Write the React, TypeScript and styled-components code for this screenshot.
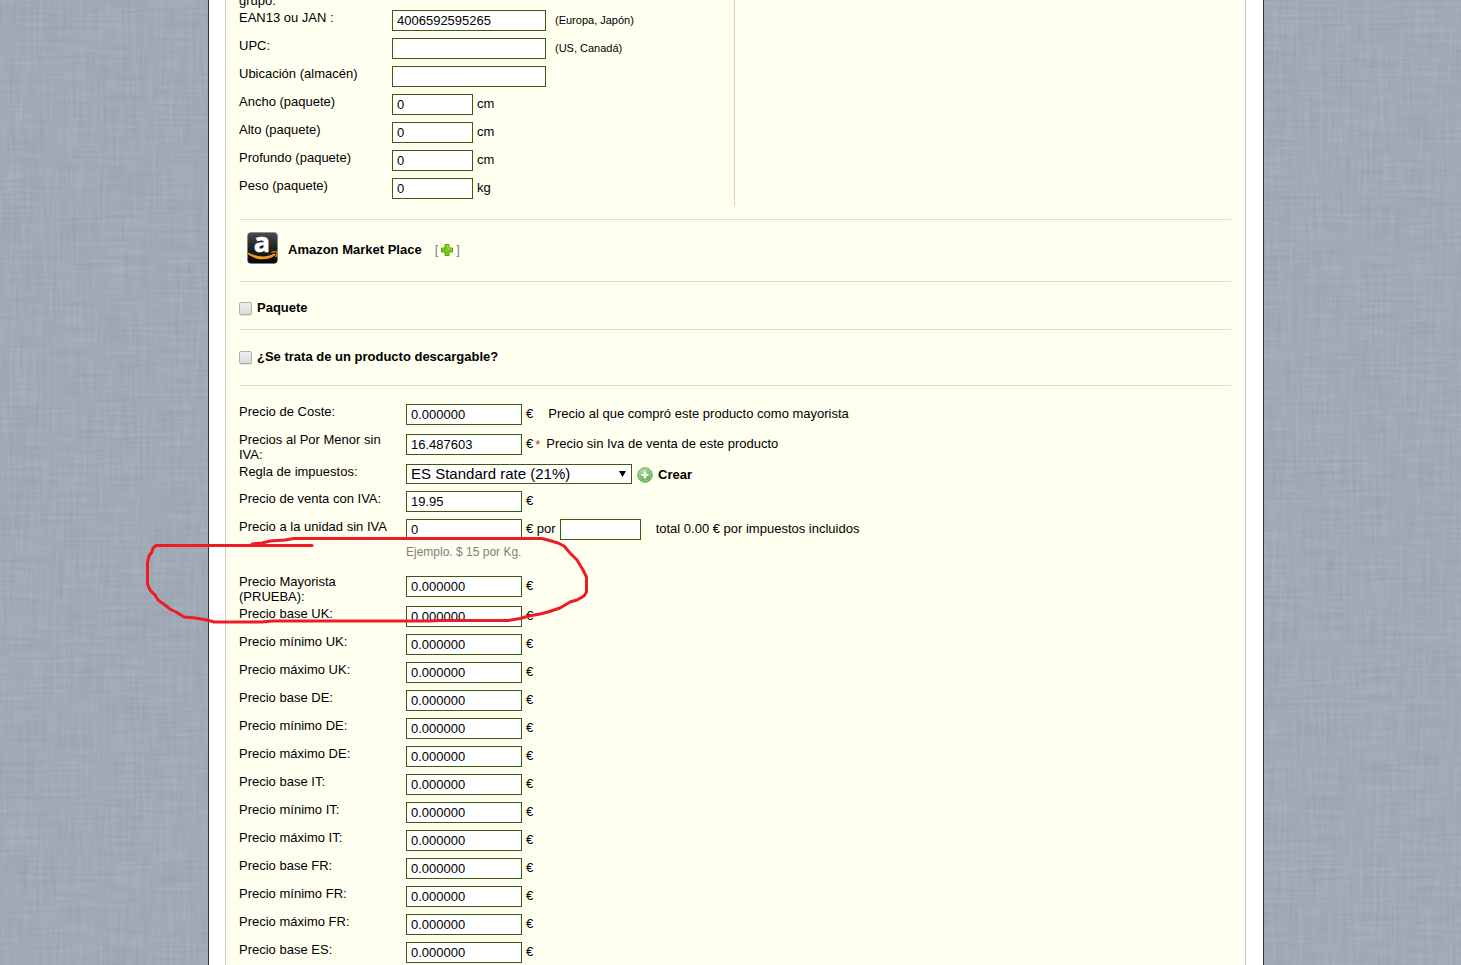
import React from "react";
import styled, { createGlobalStyle } from "styled-components";

const GlobalStyle = createGlobalStyle`
  * { box-sizing: border-box; }
  body {
    margin: 0;
    background: #a1aab6;
    color: #000;
    font: 13px/15px "Liberation Sans", Arial, sans-serif;
  }
`;

const Page = styled.div`
  position: relative;
  height: 100vh;
  overflow: hidden;
  padding: 0 197px 0 208px;
`;

const Fabric = styled.svg`
  position: absolute;
  inset: 0;
  width: 100%;
  height: 100%;
`;

const Sheet = styled.div`
  position: relative;
  background: #fff;
  border: solid #333;
  border-width: 0 1px;
  padding: 0 17px 0 16px;
`;

const Panel = styled.form`
  margin: 0;
  background: #fffff0;
  border: solid #ccc;
  border-width: 0 1px;
  padding: 0 14px 0 13px;
`;

const Columns = styled.div`
  display: grid;
  grid-template-columns: 1fr 1fr;
  margin-top: -7px;
`;

const LeftColumn = styled.div`
  border-right: 1px solid #e0d0b1;
`;

const Section = styled.section<{ $height: number; $padding?: string }>`
  display: flex;
  align-items: center;
  height: ${(p) => p.$height}px;
  padding: ${(p) => p.$padding ?? "0"};
  border-bottom: 1px solid #ddd;
`;

const Row = styled.div<{ $label: number; $height?: number }>`
  display: grid;
  grid-template-columns: ${(p) => p.$label}px 1fr;
  align-items: start;
  min-height: ${(p) => p.$height ?? 28}px;
`;

const Label = styled.label`
  padding-right: 8px;
`;

const Field = styled.div<{ $top?: number }>`
  display: flex;
  align-items: center;
  gap: 4px;
  padding-top: ${(p) => p.$top ?? 0}px;
  white-space: nowrap;
`;

const TextInput = styled.input<{ $width: number }>`
  width: ${(p) => p.$width}px;
  height: 21px;
  padding: 0 4px;
  border: 1px solid #3d5b0e;
  border-radius: 0;
  background: #fff;
  color: #000;
  font: 13px/15px "Liberation Sans", Arial, sans-serif;
  outline: none;
`;

const SelectWrap = styled.div`
  position: relative;
  display: flex;
`;

const Select = styled.select`
  appearance: none;
  width: 226px;
  height: 20px;
  padding: 0 20px 0 4px;
  border: 1px solid #3d5b0e;
  border-radius: 0;
  background: #fff;
  color: #000;
  font: 15px/18px "Liberation Sans", Arial, sans-serif;
`;

const SelectArrow = styled.svg`
  position: absolute;
  right: 6px;
  top: 7px;
  pointer-events: none;
`;

const Small = styled.span`
  font-size: 11px;
  padding-left: 5px;
`;

const Unit = styled.span`
  padding-bottom: 2px;
`;

const Note = styled.span<{ $gap: number }>`
  padding: 0 0 2px ${(p) => p.$gap}px;
`;

const Required = styled.sup`
  color: #c33;
  font-size: 13px;
  line-height: 13px;
  margin: 0 -1px 0 -2px;
`;

const Hint = styled.p`
  margin: 5px 0 0;
  color: #7f7f7f;
  font-size: 12px;
`;

const Logo = styled.svg`
  margin-bottom: 4px;
`;

const Title = styled.strong`
  margin-left: 9px;
`;

const Expand = styled.button`
  display: flex;
  align-items: center;
  gap: 2px;
  margin-left: 13px;
  padding: 0;
  border: 0;
  background: none;
  color: #7f7f7f;
  font: inherit;
`;

const CreateLink = styled.a`
  display: flex;
  align-items: center;
  gap: 5px;
  margin-left: 1px;
  color: #000;
  font-weight: bold;
  text-decoration: none;
`;

const CheckLabel = styled.label`
  display: flex;
  align-items: center;
  gap: 5px;
  font-weight: bold;
`;

const Checkbox = styled.input`
  appearance: none;
  width: 13px;
  height: 13px;
  margin: 1px 0 0;
  border: 1px solid #b1b1ac;
  border-radius: 2px;
  background: linear-gradient(#eee, #dcdcdc);
  box-shadow: 0 1px 1px #e4e4d8;
`;

const Prices = styled.div`
  padding-top: 18px;
`;

const Marker = styled.svg`
  position: absolute;
  left: 140px;
  top: 530px;
  pointer-events: none;
`;

const dimensions = [
  ["ancho", "Ancho (paquete)", "cm"],
  ["alto", "Alto (paquete)", "cm"],
  ["profundo", "Profundo (paquete)", "cm"],
  ["peso", "Peso (paquete)", "kg"],
];

const marketPrices = [
  "base UK", "mínimo UK", "máximo UK",
  "base DE", "mínimo DE", "máximo DE",
  "base IT", "mínimo IT", "máximo IT",
  "base FR", "mínimo FR", "máximo FR",
  "base ES",
];

function AmazonLogo() {
  return (
    <Logo width="32" height="32" viewBox="0 0 32 32" aria-hidden="true">
      <defs>
        <linearGradient id="tile" x1="0" y1="0" x2="0" y2="1">
          <stop offset="0" stopColor="#4a4d50" />
          <stop offset="0.5" stopColor="#1f2224" />
          <stop offset="1" stopColor="#050505" />
        </linearGradient>
      </defs>
      <rect x="0.5" y="0.5" width="30" height="31" rx="3.500" fill="url(#tile)" stroke="#77797a" strokeOpacity="0.5" />
      <text x="15" y="20" textAnchor="middle" fill="#fff" stroke="#fff" strokeWidth="0.6" fontFamily="Open Sans, sans-serif" fontWeight="bold" fontSize="27">a</text>
      <path d="M1 20.500C9 25 20 26 27 21.500L29 22.500C21 29.500 8.500 28.500 1 22Z" fill="#f59a23" />
      <path d="M24.500 20.300Q28 19.200 30.300 20.200Q30.500 22.500 28.500 25" fill="none" stroke="#d88420" strokeWidth="1.3" />
    </Logo>
  );
}

function PlusIcon() {
  return (
    <svg width="14" height="14" viewBox="0 0 14 14" aria-hidden="true">
      <path d="M5 1.500H9V5H12.500V9H9V12.500H5V9H1.500V5H5Z" fill="#79c51b" stroke="#5ea30f" />
      <path d="M6 2.500H8V6H11.500" fill="none" stroke="#a5dc5c" />
    </svg>
  );
}

function AddIcon() {
  return (
    <svg width="16" height="18" viewBox="0 -2 16 18" aria-hidden="true">
      <defs>
        <radialGradient id="add" cx="0.4" cy="0.25" r="0.8">
          <stop offset="0" stopColor="#b4dda4" />
          <stop offset="1" stopColor="#4ba63f" />
        </radialGradient>
      </defs>
      <circle cx="8" cy="8" r="7.300" fill="url(#add)" stroke="#6cb560" />
      <circle cx="8" cy="8" r="6" fill="none" stroke="#a8d79b" strokeWidth="0.8" />
      <path d="M8 4.500V11.500M4.500 8H11.500" stroke="#fff" strokeWidth="2.200" />
    </svg>
  );
}

export default function App() {
  return (
    <Page>
      <GlobalStyle />
      <Fabric aria-hidden="true">
        <filter id="warp" x="0" y="0" width="100%" height="100%" colorInterpolationFilters="sRGB">
          <feTurbulence type="fractalNoise" baseFrequency="0.02 0.3" numOctaves="2" seed="4" />
          <feColorMatrix values="0.110 0 0 0 0.573  0.110 0 0 0 0.610  0.110 0 0 0 0.658  0 0 0 0 1" />
        </filter>
        <filter id="weft" x="0" y="0" width="100%" height="100%" colorInterpolationFilters="sRGB">
          <feTurbulence type="fractalNoise" baseFrequency="0.3 0.02" numOctaves="2" seed="9" />
          <feColorMatrix values="0.110 0 0 0 0.573  0.110 0 0 0 0.610  0.110 0 0 0 0.658  0 0 0 0 0.500" />
        </filter>
        <rect width="100%" height="100%" filter="url(#warp)" />
        <rect width="100%" height="100%" filter="url(#weft)" />
      </Fabric>

      <Sheet>
        <Panel onSubmit={(e) => e.preventDefault()}>
          <Columns>
            <LeftColumn>
              <Row $label={153} $height={17}><span>grupo:</span></Row>
              <Row $label={153}>
                <Label htmlFor="ean">EAN13 ou JAN :</Label>
                <Field>
                  <TextInput id="ean" $width={154} defaultValue="4006592595265" />
                  <Small>(Europa, Japón)</Small>
                </Field>
              </Row>
              <Row $label={153}>
                <Label htmlFor="upc">UPC:</Label>
                <Field>
                  <TextInput id="upc" $width={154} />
                  <Small>(US, Canadá)</Small>
                </Field>
              </Row>
              <Row $label={153}>
                <Label htmlFor="ubicacion">Ubicación (almacén)</Label>
                <Field><TextInput id="ubicacion" $width={154} /></Field>
              </Row>
              {dimensions.map(([id, label, unit]) => (
                <Row $label={153} key={id}>
                  <Label htmlFor={id}>{label}</Label>
                  <Field><TextInput id={id} $width={81} defaultValue="0" /><Unit>{unit}</Unit></Field>
                </Row>
              ))}
            </LeftColumn>
          </Columns>

          <Section $height={14} />
          <Section $height={62} $padding="0 0 2px 8px">
            <AmazonLogo />
            <Title>Amazon Market Place</Title>
            <Expand type="button" aria-label="Mostrar Amazon Market Place">[<PlusIcon />]</Expand>
          </Section>
          <Section $height={48} $padding="4px 0 0">
            <CheckLabel><Checkbox type="checkbox" />Paquete</CheckLabel>
          </Section>
          <Section $height={56} $padding="0 0 2px">
            <CheckLabel><Checkbox type="checkbox" />¿Se trata de un producto descargable?</CheckLabel>
          </Section>

          <Prices>
            <Row $label={167}>
              <Label htmlFor="coste">Precio de Coste:</Label>
              <Field>
                <TextInput id="coste" $width={116} defaultValue="0.000000" /><Unit>€</Unit>
                <Note $gap={11}>Precio al que compró este producto como mayorista</Note>
              </Field>
            </Row>
            <Row $label={167} $height={32}>
              <Label htmlFor="menor">Precios al Por Menor sin IVA:</Label>
              <Field $top={2}>
                <TextInput id="menor" $width={116} defaultValue="16.487603" /><Unit>€</Unit>
                <Required>*</Required>
                <Note $gap={3}>Precio sin Iva de venta de este producto</Note>
              </Field>
            </Row>
            <Row $label={167} $height={27}>
              <Label htmlFor="regla">Regla de impuestos:</Label>
              <Field>
                <SelectWrap>
                  <Select id="regla"><option>ES Standard rate (21%)</option></Select>
                  <SelectArrow width="7" height="6" viewBox="0 0 7 6" aria-hidden="true"><path d="M0 0H7L3.500 6Z" /></SelectArrow>
                </SelectWrap>
                <CreateLink href="#crear"><AddIcon />Crear</CreateLink>
              </Field>
            </Row>
            <Row $label={167}>
              <Label htmlFor="venta">Precio de venta con IVA:</Label>
              <Field><TextInput id="venta" $width={116} defaultValue="19.95" /><Unit>€</Unit></Field>
            </Row>
            <Row $label={167} $height={55}>
              <Label htmlFor="unidad">Precio a la unidad sin IVA</Label>
              <div>
                <Field>
                  <TextInput id="unidad" $width={116} defaultValue="0" /><Unit>€ por</Unit>
                  <TextInput aria-label="Unidad" $width={81} />
                  <Note $gap={11}>total 0.00 € por impuestos incluidos</Note>
                </Field>
                <Hint>Ejemplo. $ 15 por Kg.</Hint>
              </div>
            </Row>
            <Row $label={167} $height={32}>
              <Label htmlFor="mayorista">Precio Mayorista (PRUEBA):</Label>
              <Field $top={2}><TextInput id="mayorista" $width={116} defaultValue="0.000000" /><Unit>€</Unit></Field>
            </Row>
            {marketPrices.map((name) => (
              <Row $label={167} key={name}>
                <Label htmlFor={name.replace(" ", "-")}>Precio {name}:</Label>
                <Field><TextInput id={name.replace(" ", "-")} $width={116} defaultValue="0.000000" /><Unit>€</Unit></Field>
              </Row>
            ))}
          </Prices>
        </Panel>
      </Sheet>

      <Marker width="456" height="100" viewBox="140 530 456 100" aria-hidden="true">
        <path
          d="M312 545.500H156L153 548L152 552L149 556L147.500 563V584L150 590L155 595L158 600L165 605L170 609L176 612L184 617L195 618L207 620L214 622H262L272 621H430L440 620.500H508L520 618.500L529 616L540 614L548 612L560 608L570 602L577 600L584 596L586.500 592V577L583 570L577 560L570 553L564 546L558 543L548 540L542 538.500H294L285 540L270 541L262 543L252 544"
          fill="none" stroke="#ed1c24" strokeWidth="3" strokeLinecap="round" strokeLinejoin="round"
        />
      </Marker>
    </Page>
  );
}
